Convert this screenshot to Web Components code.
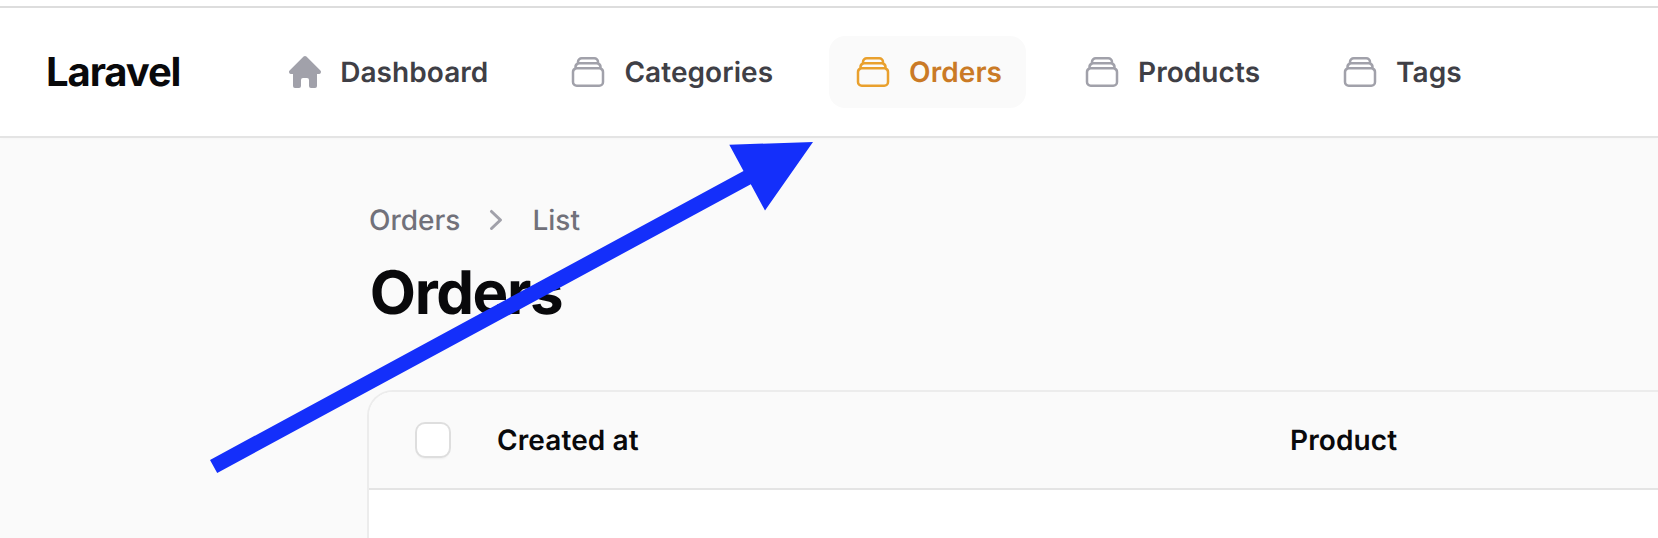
<!DOCTYPE html>
<html lang="en">
<head>
<meta charset="utf-8">
<title>Orders - Laravel</title>
<style>
html, body { margin: 0; height: 100%; overflow: hidden; }
body { background: #fafafa; font-family: Inter, "Liberation Sans", sans-serif; font-size: 28px; line-height: 40px; color: #09090b; text-rendering: geometricPrecision; }
</style>
</head>
<body>
<admin-page>
  <top-bar slot="header" brand="Laravel">
    <nav-item icon="home">Dashboard</nav-item>
    <nav-item icon="stack">Categories</nav-item>
    <nav-item icon="stack" active>Orders</nav-item>
    <nav-item icon="stack">Products</nav-item>
    <nav-item icon="stack">Tags</nav-item>
  </top-bar>
  <page-heading heading="Orders"><span slot="parent">Orders</span><span slot="current">List</span></page-heading>
  <data-table><span slot="first">Created at</span><span slot="second">Product</span></data-table>
  <pointer-arrow slot="overlay"></pointer-arrow>
</admin-page>
<script>
const define = (name, render) => customElements.define(name, class extends HTMLElement {
  constructor() {
    super();
    this.attachShadow({ mode: 'open' });
  }
  connectedCallback() {
    this.shadowRoot.innerHTML = render(this);
  }
});

const icons = {
  home: `<svg viewBox="0 0 20 20" fill="currentColor"><path d="M9.293 2.293a1 1 0 0 1 1.414 0l7 7A1 1 0 0 1 17 11h-1v6a1 1 0 0 1-1 1h-2a1 1 0 0 1-1-1v-3a1 1 0 0 0-1-1H9a1 1 0 0 0-1 1v3a1 1 0 0 1-1 1H5a1 1 0 0 1-1-1v-6H3a1 1 0 0 1-.707-1.707l7-7Z"/></svg>`,
  stack: `<svg viewBox="0 0 24 24" fill="none" stroke="currentColor" stroke-width="1.5" stroke-linecap="round" stroke-linejoin="round"><path d="M6 6.878V6a2.25 2.25 0 0 1 2.25-2.25h7.5A2.25 2.25 0 0 1 18 6v.878m-12 0c.235-.083.487-.128.75-.128h10.5c.263 0 .515.045.75.128m-12 0A2.25 2.25 0 0 0 4.5 9v.878m13.5-3A2.25 2.25 0 0 1 19.5 9v.878m0 0a2.246 2.246 0 0 0-.75-.128H5.25c-.263 0-.515.045-.75.128m15 0A2.25 2.25 0 0 1 21 12v6a2.25 2.25 0 0 1-2.25 2.25H5.25A2.25 2.25 0 0 1 3 18v-6c0-.98.626-1.813 1.5-2.122"/></svg>`
};

define('admin-page', () => `
  <style>
    :host { display: block; position: relative; height: 538px; overflow: hidden; }
    main { display: flex; flex-direction: column; gap: 63px; padding: 64px 0 0 369px; }
  </style>
  <slot name="header"></slot>
  <main><slot></slot></main>
  <slot name="overlay"></slot>`);

define('top-bar', el => `
  <style>
    :host { display: flex; align-items: center; box-sizing: border-box; height: 136px; padding: 8px 0 0 46px; background: linear-gradient(#fff 6px, #ddd 6px 8px, #fff 8px); box-shadow: 0 2px 0 #e4e4e4, 0 3px 3px rgba(0,0,0,.02); }
    .brand { width: 214.2px; flex: none; font-size: 40px; font-weight: 700; letter-spacing: -1.1px; }
    nav { display: flex; gap: 32px; }
  </style>
  <div class="brand">${el.getAttribute('brand')}</div>
  <nav><slot></slot></nav>`);

define('nav-item', el => `
  <style>
    :host { display: flex; align-items: center; gap: 16px; padding: 16px 24px; border-radius: 16px; font-weight: 600; letter-spacing: .06px; color: #3f3f46; white-space: nowrap; }
    :host([active]) { background: #fafafa; color: #ca7a26; }
    svg { display: block; width: 40px; height: 40px; color: #a1a1aa; }
    :host([icon="home"]) svg { margin: 0 -.6px 0 .6px; }
    :host([active]) svg { color: #e9a02d; }
  </style>
  ${icons[el.getAttribute('icon')]}<slot></slot>`);

define('page-heading', el => `
  <style>
    :host { display: block; }
    .crumbs { display: flex; align-items: center; gap: 16px; font-weight: 500; color: #71717a; }
    svg { width: 40px; height: 40px; color: #a1a1aa; }
    h1 { margin: 17px 0 0; font-size: 60px; line-height: 72px; font-weight: 700; letter-spacing: -1.4px; text-indent: .8px; }
  </style>
  <div class="crumbs"><slot name="parent"></slot>
    <svg viewBox="0 0 20 20" fill="currentColor"><path fill-rule="evenodd" d="M7.21 14.77a.75.75 0 0 1 .02-1.06L11.168 10 7.23 6.29a.75.75 0 1 1 1.04-1.08l4.5 4.25a.75.75 0 0 1 0 1.08l-4.5 4.25a.75.75 0 0 1-1.06-.02Z" clip-rule="evenodd"/></svg>
    <slot name="current"></slot></div>
  <h1>${el.getAttribute('heading')}</h1>`);

define('data-table', () => `
  <style>
    :host { display: block; height: 200px; margin-right: -40px; overflow: hidden; border-radius: 24px; background: #fff; box-shadow: 0 0 0 2px #ececec; }
    .head { display: grid; grid-template-columns: 128px 793px 1fr; align-items: center; height: 96px; background: #fafafa; border-bottom: 2px solid #e4e4e4; font-weight: 600; letter-spacing: .1px; }
    .check { width: 32px; height: 32px; margin-left: 48px; border-radius: 8px; background: #fff; box-shadow: 0 0 0 2px #dedede, 0 3px 2px rgba(0,0,0,.05); }
  </style>
  <div class="head"><div class="check"></div><slot name="first"></slot><slot name="second"></slot></div>`);

define('pointer-arrow', () => `
  <style>
    :host { display: block; position: absolute; inset: 0; pointer-events: none; }
    svg { display: block; }
  </style>
  <svg width="1658" height="538" viewBox="0 0 1658 538"><path fill="#142ffa" d="M210 460 743.5 171 729.3 144.7 813 142 765 210.5 750.8 184.3 217.2 473Z"/></svg>`);
</script>
</body>
</html>
